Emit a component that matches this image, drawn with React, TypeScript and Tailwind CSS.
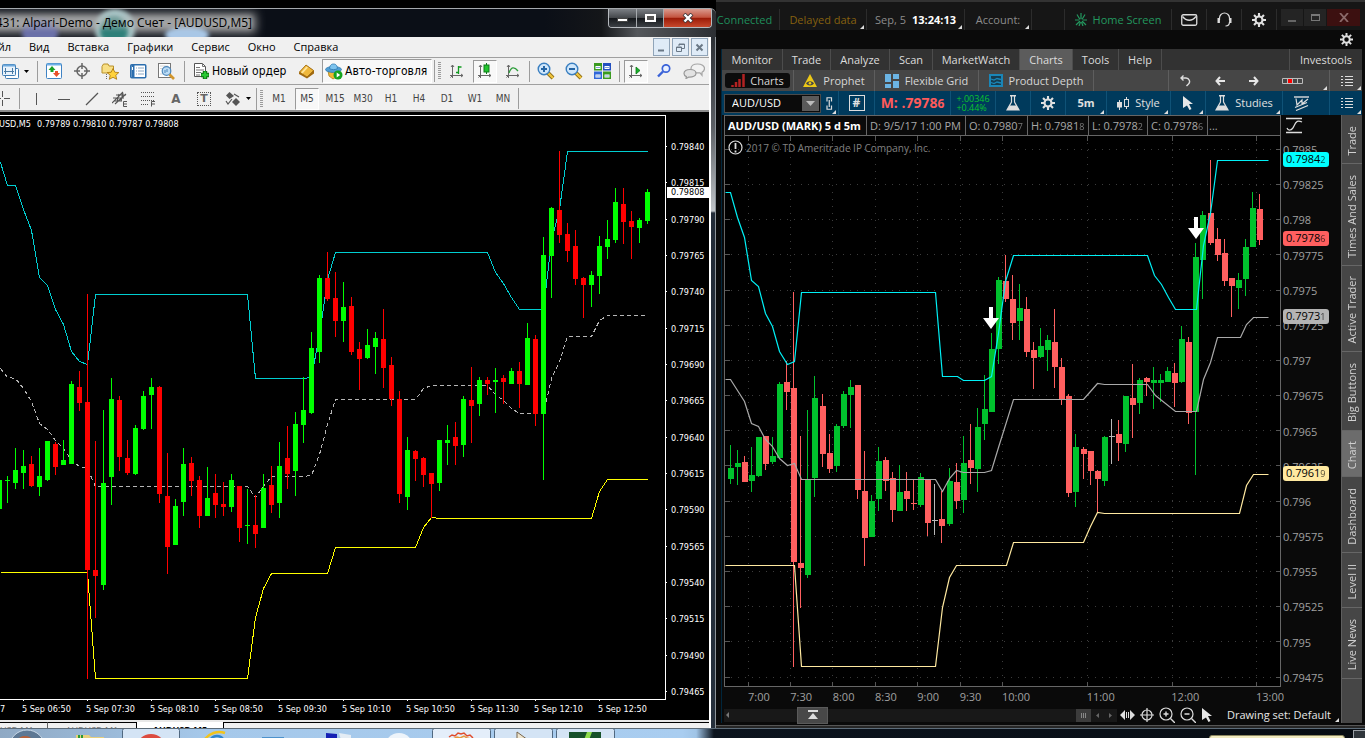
import React from "react";

type Candle = [string, number, number, number, number];

const leftCandles: Candle[] = [
  ["g", 480, 480, 509, 509], ["g", 476, 480, 481, 503], ["g", 448, 470, 483, 489], ["g", 450, 466, 473, 489],
  ["r", 456, 464, 486, 487], ["g", 448, 476, 487, 496], ["g", 441, 441, 480, 481], ["r", 442, 444, 467, 475],
  ["g", 440, 460, 465, 465], ["g", 381, 384, 464, 464], ["r", 371, 387, 403, 411], ["r", 294, 402, 570, 679],
  ["r", 441, 570, 576, 618], ["g", 410, 483, 585, 590], ["g", 378, 399, 477, 505], ["r", 396, 400, 457, 471],
  ["r", 440, 458, 473, 475], ["g", 425, 428, 474, 475], ["g", 391, 396, 429, 430], ["g", 378, 387, 395, 429],
  ["r", 386, 387, 494, 503], ["r", 453, 496, 547, 574], ["g", 499, 506, 545, 545], ["g", 448, 464, 502, 516],
  ["r", 457, 463, 481, 496], ["r", 476, 480, 516, 528], ["g", 467, 498, 516, 516], ["r", 474, 493, 505, 518],
  ["r", 482, 504, 507, 516], ["g", 474, 480, 507, 512], ["r", 486, 486, 528, 542], ["g", 489, 525, 526, 544],
  ["r", 495, 525, 534, 548], ["g", 474, 488, 528, 528], ["r", 466, 485, 505, 513], ["g", 442, 466, 503, 518],
  ["r", 426, 458, 474, 489], ["g", 412, 424, 471, 496], ["g", 377, 410, 425, 443], ["g", 332, 348, 413, 414],
  ["g", 275, 278, 352, 363], ["r", 252, 278, 299, 301], ["r", 272, 298, 321, 337], ["g", 282, 307, 321, 342],
  ["r", 297, 306, 352, 355], ["r", 342, 349, 359, 390], ["g", 329, 345, 358, 359], ["g", 332, 338, 347, 374],
  ["r", 309, 339, 368, 388], ["r", 357, 365, 399, 406], ["r", 391, 399, 494, 503], ["g", 437, 450, 497, 510],
  ["r", 450, 451, 459, 481], ["r", 457, 458, 475, 487], ["r", 473, 473, 484, 518], ["g", 440, 440, 483, 491],
  ["g", 425, 440, 443, 465], ["r", 422, 437, 446, 465], ["g", 396, 399, 445, 457], ["r", 367, 400, 406, 443],
  ["g", 377, 380, 404, 416], ["r", 377, 380, 384, 395], ["g", 368, 380, 382, 413], ["r", 375, 378, 382, 404],
  ["g", 368, 371, 384, 384], ["r", 362, 371, 384, 408], ["g", 323, 338, 385, 385], ["r", 335, 339, 414, 426],
  ["g", 237, 255, 414, 480], ["g", 207, 208, 256, 298], ["r", 151, 210, 235, 243], ["r", 223, 234, 251, 262],
  ["r", 230, 246, 279, 285], ["r", 277, 278, 285, 318], ["g", 271, 275, 285, 307], ["g", 236, 246, 276, 294],
  ["g", 220, 239, 247, 259], ["g", 188, 202, 240, 243], ["r", 188, 204, 222, 244], ["r", 211, 221, 227, 259],
  ["g", 218, 220, 228, 243], ["g", 189, 192, 221, 224],
];

const rightCandles: Candle[] = [
  ["g", 445, 468, 479, 484], ["g", 450, 463, 467, 485], ["r", 456, 462, 482, 482], ["g", 447, 475, 481, 492],
  ["g", 437, 437, 476, 477], ["r", 436, 436, 464, 470], ["g", 437, 456, 462, 464], ["g", 382, 384, 458, 458],
  ["r", 361, 382, 392, 410], ["r", 292, 388, 562, 667], ["r", 436, 563, 568, 608], ["g", 410, 480, 575, 578],
  ["g", 376, 398, 478, 497], ["r", 394, 406, 454, 467], ["r", 434, 453, 469, 473], ["g", 424, 426, 466, 472],
  ["g", 391, 394, 426, 428], ["g", 380, 387, 395, 428], ["r", 385, 385, 490, 499], ["r", 451, 491, 538, 566],
  ["g", 495, 501, 537, 537], ["g", 447, 461, 499, 511], ["r", 457, 460, 481, 491], ["r", 472, 478, 510, 522],
  ["g", 465, 492, 511, 511], ["r", 472, 491, 499, 511], ["r", 480, 503, 504, 510], ["g", 473, 477, 505, 507],
  ["r", 480, 480, 523, 536], ["n", 484, 520, 521, 535], ["r", 491, 519, 526, 543], ["g", 468, 481, 524, 526],
  ["r", 463, 482, 501, 509], ["g", 436, 463, 500, 513], ["r", 424, 460, 468, 484], ["g", 408, 427, 469, 492],
  ["g", 375, 409, 424, 440], ["g", 333, 349, 412, 412], ["g", 277, 280, 349, 364], ["r", 255, 281, 299, 302],
  ["r", 275, 299, 323, 340], ["g", 284, 308, 321, 340], ["r", 297, 309, 352, 357], ["r", 342, 350, 358, 389],
  ["g", 328, 346, 357, 358], ["g", 335, 340, 350, 371], ["r", 309, 342, 367, 388], ["r", 358, 367, 399, 405],
  ["r", 394, 396, 493, 497], ["g", 434, 447, 492, 507], ["r", 447, 449, 454, 479], ["r", 451, 451, 471, 485],
  ["r", 470, 471, 479, 512], ["g", 436, 437, 481, 486], ["n", 419, 436, 437, 464], ["r", 420, 434, 443, 461],
  ["g", 396, 396, 444, 452], ["r", 364, 398, 405, 438], ["g", 378, 380, 403, 414], ["r", 377, 378, 382, 396],
  ["g", 367, 380, 383, 409], ["g", 374, 380, 383, 402], ["g", 367, 371, 382, 382], ["r", 363, 373, 383, 407],
  ["g", 326, 339, 382, 383], ["r", 337, 342, 413, 424], ["g", 243, 257, 412, 475], ["g", 211, 215, 260, 299],
  ["r", 160, 213, 243, 245], ["r", 228, 239, 255, 261], ["r", 239, 253, 281, 286], ["r", 278, 278, 286, 317],
  ["g", 273, 280, 288, 309], ["g", 239, 247, 279, 296], ["g", 192, 208, 247, 247], ["r", 194, 209, 240, 245],
];

function Candles({ data, x0, step, body, colors }: { data: Candle[]; x0: number; step: number; body: number; colors: Record<string, string> }) {
  return (
    <g shapeRendering="crispEdges">
      {data.map(([c, hi, top, bot, lo], i) => {
        const x = Math.floor(x0 + step * i);
        return (
          <g key={i} fill={colors[c]}>
            <rect x={x} y={hi} width={1} height={Math.max(1, lo - hi)} />
            <rect x={x - 2} y={top} width={body} height={Math.max(1, bot - top)} />
          </g>
        );
      })}
    </g>
  );
}

function Icon({ w = 16, h = 16, children }: { w?: number; h?: number; children: React.ReactNode }) {
  return (
    <svg width={w} height={h} viewBox={`0 0 ${w} ${h}`} fill="none" className="block shrink-0" aria-hidden="true">
      {children}
    </svg>
  );
}

/* ---------- MetaTrader window ---------- */

const leftPrices = ["0.79840", "0.79815", "0.79790", "0.79765", "0.79740", "0.79715", "0.79690", "0.79665", "0.79640", "0.79615", "0.79590", "0.79565", "0.79540", "0.79515", "0.79490", "0.79465"];
const leftTimes = ["5 Sep 06:50", "5 Sep 07:30", "5 Sep 08:10", "5 Sep 08:50", "5 Sep 09:30", "5 Sep 10:10", "5 Sep 10:50", "5 Sep 11:30", "5 Sep 12:10", "5 Sep 12:50"];

function Tool({ label, pressed, children }: { label: string; pressed?: boolean; children: React.ReactNode }) {
  return (
    <button
      aria-label={label}
      title={label}
      className={
        pressed
          ? "flex h-[23px] w-[24px] mx-[2px] shrink-0 items-center justify-center border border-b-white border-r-white border-l-[#9a9a9a] border-t-[#9a9a9a] bg-[#f8f8f8]"
          : "flex h-[23px] w-[28px] shrink-0 items-center justify-center"
      }
    >
      {children}
    </button>
  );
}

function Sep({ box }: { box: string }) {
  return (
    <span className={`flex h-[21px] shrink-0 justify-center ${box}`}>
      <span className="h-full w-px bg-[#9c9c9c]" />
    </span>
  );
}

function Grip() {
  return (
    <span className="flex h-[22px] w-[9px] shrink-0 items-center gap-[2px] border-l border-[#9c9c9c]">
      <span className="ml-[3px] h-[18px] w-[3px] bg-[repeating-linear-gradient(#9c9c9c_0_1px,#f0f0f0_1px_2px)]" />
    </span>
  );
}

function Caret() {
  return (
    <Icon w={5} h={3}>
      <path d="M0 0h5L2.500 3z" fill="#000" />
    </Icon>
  );
}

function AxisIcon({ children }: { children: React.ReactNode }) {
  return (
    <Icon w={16} h={16}>
      <path d="M3.500 2v13M1 12.500h13M2 4l1.500-2L5 4M12 11l2 1.500-2 1.500M1.500 14.500l2-2" stroke="#666" />
      {children}
    </Icon>
  );
}

function Lens({ plus }: { plus: boolean }) {
  return (
    <Icon w={18} h={18}>
      <path d="M10.500 10.500l5.500 5.500" stroke="#8a6a14" strokeWidth="4" />
      <path d="M11 11l5 5" stroke="#f0c53c" strokeWidth="2.400" />
      <circle cx="7" cy="7" r="5.800" fill="#cfe6fa" stroke="#3a7fc0" strokeWidth="1.400" />
      <path d={plus ? "M4 7h6M7 4v6" : "M4 7h6"} stroke="#2565a5" strokeWidth="2" />
    </Icon>
  );
}

function TitleBar() {
  return (
    <div className="relative flex h-[29px] shrink-0 items-center justify-between overflow-hidden rounded-tr-md border-t border-[#a5a9ad] bg-[linear-gradient(90deg,#0b0f17_0%,#0b0f17_76%,#141619_84%,#54575b_89%,#2c2f33_100%)] pr-[4px]">
      <svg className="absolute left-0 top-0 h-full w-[280px]" viewBox="0 0 280 28" aria-hidden="true">
        <defs>
          <filter id="soft" x="-20%" y="-60%" width="140%" height="220%"><feGaussianBlur stdDeviation="5" /></filter>
          <filter id="soft2" x="-30%" y="-30%" width="160%" height="160%"><feGaussianBlur stdDeviation="2" /></filter>
        </defs>
        <rect x="-20" y="4" width="276" height="20" fill="#8f9092" filter="url(#soft)" />
        <ellipse cx="40" cy="24" rx="18" ry="13" fill="#6a6fa8" filter="url(#soft2)" />
        <circle cx="115" cy="20" r="20" fill="#a9c4c6" filter="url(#soft2)" />
        <circle cx="114" cy="22" r="14" fill="#2f8079" filter="url(#soft2)" />
        <ellipse cx="187" cy="26" rx="22" ry="9" fill="#a9c7e6" filter="url(#soft2)" />
        <rect x="-10" y="7" width="262" height="13" fill="#bbb" opacity=".45" filter="url(#soft2)" />
      </svg>
      <div className="relative flex w-[252px] justify-end overflow-hidden whitespace-nowrap text-[12px] leading-4 text-black">
        1431: Alpari-Demo - Демо Счет - [AUDUSD,M5]
      </div>
      <div className="relative flex h-[19px] self-start overflow-hidden rounded-b-[4px] border border-t-0 border-[#b6babf]">
        <button aria-label="Minimize" className="flex w-[28px] items-center justify-center border-r border-[#a5a9ad] bg-[linear-gradient(#7b7f84,#45484c_48%,#15181c_52%,#3c4045)]">
          <span className="mt-1 h-[4px] w-[11px] border border-[#444] bg-white" />
        </button>
        <button aria-label="Maximize" className="flex w-[27px] items-center justify-center border-r border-[#a5a9ad] bg-[linear-gradient(#7b7f84,#45484c_48%,#15181c_52%,#3c4045)]">
          <span className="h-[8px] w-[11px] border-2 border-white bg-[#555]" />
        </button>
        <button aria-label="Close" className="flex w-[47px] items-center justify-center bg-[linear-gradient(#d99a8e,#c4543f_46%,#9c1c08_52%,#c6482c)]">
          <Icon w={12} h={10}>
            <path d="M2 1l8 8M10 1L2 9" stroke="#43383a" strokeWidth="4" />
            <path d="M2.500 1.500l7 7M9.500 1.500l-7 7" stroke="#fff" strokeWidth="2.400" />
          </Icon>
        </button>
      </div>
    </div>
  );
}

function MenuBar() {
  return (
    <div className="flex h-[21px] shrink-0 items-center justify-between border-b border-[#a0a0a0] bg-[#f0f0f0] pr-px">
      <nav className="flex items-center gap-[18px] text-[11px] leading-4 text-black">
        <button className="flex w-[11px] justify-end overflow-hidden">Файл</button>
        {["Вид", "Вставка", "Графики", "Сервис", "Окно", "Справка"].map((m) => (
          <button key={m}>{m}</button>
        ))}
      </nav>
      <div className="flex gap-[2px]">
        {["Minimize chart", "Restore chart", "Close chart"].map((n, i) => (
          <button key={n} aria-label={n} className="flex h-[18px] w-[17px] items-center justify-center border border-[#90a4b8] bg-[#dfebf7]">
            <Icon w={9} h={9}>
              {i === 0 && <path d="M1 7.500h6" stroke="#6a7886" strokeWidth="2" />}
              {i === 1 && <path d="M3 3V1h5.500v4.500H6M.5 4h5v4.500h-5zM.5 4.500h5M3 1.500h5" stroke="#6a7886" />}
              {i === 2 && <path d="M1.500 1.500l6 6M7.500 1.500l-6 6" stroke="#6a7886" strokeWidth="2" />}
            </Icon>
          </button>
        ))}
      </div>
    </div>
  );
}

function MainToolbar() {
  return (
    <div className="flex h-[27px] shrink-0 items-center overflow-hidden border-b border-[#a0a0a0] bg-[#f0f0f0]">
      <button aria-label="Profiles" className="flex w-[34px] shrink-0 items-center gap-[4px] pl-px">
        <Icon w={19} h={17}>
          <rect x="4.500" y="5.500" width="13" height="10" rx="1" fill="#fff" stroke="#3f7cb3" />
          <rect x="1.500" y="1.500" width="13" height="11" rx="1" fill="#e8f2fb" stroke="#3f7cb3" />
          <path d="M2 2.500h12" stroke="#6da9dc" strokeWidth="2" />
          <path d="M4.500 5v6M11.500 5v6M3 8.500h10" stroke="#4a7ba4" />
        </Icon>
        <Caret />
      </button>
      <Sep box="w-[6px]" />
      <Tool label="Market Watch">
        <Icon>
          <rect x=".5" y=".5" width="15" height="15" rx="1" fill="#fff" stroke="#3f83c4" />
          <path d="M1 1.500h14" stroke="#6fb0e6" strokeWidth="2" />
          <path d="M6 3l3.500 4h-2v2h-3V7h-2z" fill="#18a028" />
          <path d="M10.500 14L7 10h2V8h3v2h2z" fill="#e8502a" />
        </Icon>
      </Tool>
      <Tool label="Data Window">
        <Icon>
          <circle cx="8" cy="8" r="5" stroke="#666" strokeWidth="1.500" />
          <path d="M8 0v6M8 10v6M0 8h6M10 8h6" stroke="#666" strokeWidth="1.500" />
        </Icon>
      </Tool>
      <Tool label="Navigator">
        <Icon w={18} h={17}>
          <path d="M1 3.500L2.500 1H7l1 2h4.500v7H1z" fill="#f8df85" stroke="#b8902a" />
          <path d="M5.500 11v5" stroke="#666" strokeDasharray="1 1" />
          <path d="M12 5.500l1.800 3.700 4 .4-3 2.700.9 4-3.700-2-3.700 2 .9-4-3-2.700 4-.4z" fill="#ffd23c" stroke="#a87408" strokeWidth=".8" />
        </Icon>
      </Tool>
      <Tool label="Terminal">
        <Icon w={17} h={15}>
          <rect x=".75" y=".75" width="15" height="13" rx="1" fill="#fff" stroke="#2c6eae" strokeWidth="1.500" />
          <path d="M3 1v12" stroke="#2c6eae" strokeWidth="3" />
          <path d="M6 4h1M8 4h6M6 7h1M8 7h6M6 10h1M8 10h6" stroke="#8aa6c2" />
          <path d="M2.500 3v3" stroke="#fff" />
        </Icon>
      </Tool>
      <Tool label="Strategy Tester">
        <Icon w={17} h={17}>
          <rect x=".5" y=".5" width="12" height="14" fill="#fff" stroke="#777" />
          <path d="M2.500 3h8M2.500 5.500h3M2.500 11h3" stroke="#aaa" strokeDasharray="1 1" />
          <circle cx="8.500" cy="8" r="4.300" fill="#bcdcf5" stroke="#4b86bb" strokeWidth="1.200" />
          <path d="M7 10V7M9 9V6" stroke="#4b86bb" />
          <path d="M11.500 11.500l4.500 4.500" stroke="#d2962c" strokeWidth="2.600" />
        </Icon>
      </Tool>
      <Sep box="w-[8px]" />
      <button className="flex h-[23px] w-[102px] shrink-0 items-center gap-[1px] pl-[5px] font-['DejaVu_Sans_Condensed','DejaVu_Sans',sans-serif] text-[12px] text-black">
        <Icon w={18} h={17}>
          <path d="M1.500.5h8l3 3v10h-11z" fill="#fff" stroke="#555" />
          <path d="M9.500.5v3h3M3 4.500h4M3 7h8M3 9.500h5M3 12h4" stroke="#777" />
          <path d="M8 12h8M12 8v8" stroke="#0b6d12" strokeWidth="4.400" />
          <path d="M8.500 12h7M12 8.500v7" stroke="#28c832" strokeWidth="2.400" />
        </Icon>
        <span className="whitespace-nowrap">Новый ордер</span>
      </button>
      <button aria-label="MetaEditor" className="flex h-[23px] w-[32px] shrink-0 items-center justify-center">
        <Icon w={17} h={15}>
          <path d="M1 8.500L8 1l8 5.500v3L9 14.500 1 10z" fill="#a06a10" />
          <path d="M1.500 8L8 1l7.500 5.500L9 13z" fill="#efb83c" stroke="#a06a10" strokeWidth=".8" />
          <path d="M3 8.500l5.500-6 1.500 1-5.500 6z" fill="#ffe49a" />
        </Icon>
      </button>
      <button className="flex h-[24px] w-[110px] shrink-0 items-center gap-[2px] border border-b-white border-r-white border-l-[#9a9a9a] border-t-[#9a9a9a] bg-[#f8f8f8] pl-[2px] font-['DejaVu_Sans_Condensed','DejaVu_Sans',sans-serif] text-[12px] text-black">
        <Icon w={18} h={17}>
          <path d="M3 8h11l-1 5-5 3-4-3z" fill="#f0b834" stroke="#b08018" strokeWidth=".8" />
          <ellipse cx="8.500" cy="6.500" rx="8" ry="3" fill="#4f9ed4" stroke="#2d78b0" strokeWidth=".8" />
          <path d="M4.500 5.500C5 1.500 7 1 8.500 1s3.500.5 4 4.500c-2 1.500-6 1.500-8 0z" fill="#7cc3ee" stroke="#2d78b0" strokeWidth=".8" />
          <circle cx="13" cy="12" r="4.500" fill="#14a41e" />
          <path d="M11.700 9.500v5l3.500-2.500z" fill="#fff" />
        </Icon>
        <span className="whitespace-nowrap">Авто-торговля</span>
      </button>
      <span className="w-[2px] shrink-0" />
      <Grip />
      <Tool label="Bar chart"><AxisIcon><path d="M9.500 3v8M9.500 4h3M7 9.500h2.500" stroke="#129a20" strokeWidth="1.300" /></AxisIcon></Tool>
      <Tool label="Candlesticks" pressed>
        <AxisIcon>
          <path d="M9.500 0v11" stroke="#0d7a18" />
          <rect x="7" y="2" width="5" height="7" fill="#22c52e" stroke="#0d7a18" />
        </AxisIcon>
      </Tool>
      <Tool label="Line chart"><AxisIcon><path d="M4 10c2-6 5-7 9-2" stroke="#2f9e3c" strokeWidth="1.300" /></AxisIcon></Tool>
      <Sep box="w-[5px]" />
      <Tool label="Zoom in"><Lens plus /></Tool>
      <Tool label="Zoom out"><Lens plus={false} /></Tool>
      <Tool label="Tile windows">
        <Icon w={17} h={16}>
          <rect x="0" y="0" width="8" height="7.500" fill="#3a9a20" />
          <rect x="9" y="0" width="8" height="7.500" fill="#2350c0" />
          <rect x="0" y="8.500" width="8" height="7.500" fill="#2f66d8" />
          <rect x="9" y="8.500" width="8" height="7.500" fill="#3a9a20" />
          <path d="M1.500 4.500h5M10.500 4.500h5M1.500 13h5M10.500 13h5" stroke="#fff" strokeWidth="3" />
          <path d="M2 4.500h4M11 4.500h4M2 13h4M11 13h4" stroke="#7fa4d8" />
        </Icon>
      </Tool>
      <Sep box="w-[6px]" />
      <Tool label="Chart shift" pressed><AxisIcon><path d="M8 4v7l4-3.500z" fill="#18b028" stroke="#0d7a18" strokeWidth=".8" /></AxisIcon></Tool>
      <Tool label="Search">
        <Icon w={14} h={14}>
          <circle cx="9" cy="4.500" r="3.700" fill="#e8f0ff" stroke="#3a62d8" strokeWidth="1.700" />
          <path d="M6 7.500l-5 5" stroke="#3a62d8" strokeWidth="2.400" />
        </Icon>
      </Tool>
      <button aria-label="Chat" className="flex h-[23px] w-[31px] shrink-0 items-center justify-center">
        <Icon w={22} h={16}>
          <path d="M14.500 1C10.500 1 8 3 8 5.500s2.500 4 5 4.300l4 0 2 2.500V9.300C20.500 8.500 21.500 7 21.500 5.500 21.500 3 18.500 1 14.500 1z" fill="#f2f2f2" stroke="#a5a5a5" strokeWidth="1.200" />
          <path d="M7 6.500c-3.500 0-6 1.600-6 3.900 0 1.500 1 2.600 2.400 3.200L3 15.500l2.600-1.400c4 .3 7.400-1.200 7.400-3.700 0-2.300-2.500-3.900-6-3.900z" fill="#e2e2e2" stroke="#999" strokeWidth="1.200" />
        </Icon>
      </button>
    </div>
  );
}

function LineToolbar() {
  const k = "#555";
  return (
    <div className="flex h-[27px] shrink-0 items-center overflow-hidden border-b-2 border-[#8c8c8c] bg-[#f0f0f0] pt-[2px] text-[#444]">
      <button aria-label="Crosshair" className="flex w-[17px] shrink-0">
        <Icon w={10} h={15}><path d="M2.500 0v6M2.500 9v6M0 7.500h1M4 7.500h6" stroke={k} /></Icon>
      </button>
      <Sep box="w-[5px]" />
      <Tool label="Vertical line"><Icon><path d="M8.500 2v12" stroke={k} /></Icon></Tool>
      <Tool label="Horizontal line"><Icon><path d="M2 8.500h12" stroke={k} /></Icon></Tool>
      <Tool label="Trend line"><Icon><path d="M2 14L14 2" stroke={k} strokeWidth="1.200" /></Icon></Tool>
      <Tool label="Channel">
        <Icon>
          <path d="M0 12L11 1M3 13L14 3M1 7h11M4 4h10M2 10h8M5 11l2-8M9 10l2-8" stroke={k} strokeWidth="1.100" />
          <path d="M15 10.500h-3.500v5H15M11.500 13H15" stroke={k} />
        </Icon>
      </Tool>
      <Tool label="Fibonacci">
        <Icon>
          <path d="M1 1.500h14M1 5.500h14M1 9.500h14M1 13.500h8" stroke={k} strokeDasharray="1 1" />
          <path d="M15 10.500h-3.500v5M11.500 13H15" stroke={k} />
        </Icon>
      </Tool>
      <Tool label="Text"><span className="font-['DejaVu_Sans',sans-serif] text-[12px] font-bold leading-4 text-[#666]">A</span></Tool>
      <Tool label="Text label">
        <span className="flex h-[14px] w-[14px] items-center justify-center border border-dotted border-[#555] font-['DejaVu_Sans',sans-serif] text-[11px] font-bold leading-3 text-[#666]">T</span>
      </Tool>
      <Tool label="Arrows">
        <Icon w={15} h={14}>
          <path d="M4.500 0L9 4 4.500 7 1 3.500z" fill={k} />
          <path d="M11 6l4 4-4 4-4-4z" fill={k} />
          <path d="M1 9l2 3 4-5M9 2l5 3" stroke={k} strokeWidth="1.200" />
        </Icon>
      </Tool>
      <span className="flex w-[10px] shrink-0"><Caret /></span>
      <Grip />
      {["M1", "M5", "M15", "M30", "H1", "H4", "D1", "W1", "MN"].map((t) => (
        <button
          key={t}
          className={
            t === "M5"
              ? "mx-[2px] flex h-[22px] w-[24px] shrink-0 items-center justify-center border border-b-white border-r-white border-l-[#9a9a9a] border-t-[#9a9a9a] bg-[#f8f8f8] font-['DejaVu_Sans_Condensed','DejaVu_Sans',sans-serif] text-[10px]"
              : "flex h-[22px] w-[28px] shrink-0 items-center justify-center font-['DejaVu_Sans_Condensed','DejaVu_Sans',sans-serif] text-[10px]"
          }
        >
          {t}
        </button>
      ))}
      <Sep box="w-[3px]" />
    </div>
  );
}

function LeftChart() {
  return (
    <div className="flex min-h-0 flex-1 flex-col bg-black font-['DejaVu_Sans_Condensed','DejaVu_Sans',sans-serif] text-[9px] leading-[10px] text-white">
      <div className="flex min-h-0 flex-1">
        <div className="relative min-w-0 flex-1">
          <svg viewBox="0 112 667 589" preserveAspectRatio="none" className="absolute inset-0 h-full w-full" fill="none" role="img" aria-label="AUDUSD M5 candlestick chart">
            <g stroke="#fff" shapeRendering="crispEdges">
              <path d="M0 115.500H665.500V699.500H0" />
              {leftPrices.map((p, i) => <path key={p} d={`M665 ${Math.round(146 + 36.33 * i)}.500h3`} />)}
              {leftTimes.map((t, i) => <path key={t} d={`M${23.5 + 64 * i} 700v3`} />)}
            </g>
            <g transform="translate(.5 .5)" shapeRendering="crispEdges">
              <path stroke="#00ced1" d="M0 162L7 185H15L23 209L31 230L39 277L47 285L55 309L63 324L71 351L79 361L87 364L95 294H247L255 378H305L311 376L319 335L327 279L335 252H487L495 272L503 283L511 297L519 309H543L551 240L559 209L567 151H647" />
              <path stroke="#b5b5b5" strokeDasharray="4 3" d="M0 368L7 377L15 378L23 388L31 401L39 423L47 429L55 440L63 448L71 460L79 466L87 468L95 486H247L255 497L263 486L271 476H303L311 475L319 454L327 424L335 399H415L423 388L431 385H487L495 394L503 400L511 408L519 413H543L551 378L559 361L567 336H591L599 320L607 315H647" />
              <path stroke="#ff0" d="M0 572H87L95 678H247L255 617L263 588L271 573H327L335 547H415L423 527L431 517L439 518H591L599 491L607 479H647" />
            </g>
            <Candles data={leftCandles} x0={-1} step={8} body={5} colors={{ g: "#00ff00", r: "#ff0000", n: "#bbb" }} />
          </svg>
          <div className="relative flex gap-[6px] whitespace-pre pt-[7px]">
            <span className="flex w-[31px] justify-end overflow-hidden">AUDUSD,M5</span>
            <span>0.79789 0.79810 0.79787 0.79808</span>
          </div>
        </div>
        <div className="relative flex w-[42px] shrink-0 flex-col justify-between pb-[4px] pl-[4px] pt-[30px]">
          {leftPrices.map((p) => <span key={p}>{p}</span>)}
          <span className="absolute left-0 top-[75px] w-full bg-white pl-[4px] leading-[11px] text-black">0.79808</span>
        </div>
      </div>
      <div className="flex h-[19px] shrink-0 items-start pt-[3px]">
        <span className="w-[22px] shrink-0">7</span>
        <div className="grid min-w-0 flex-1 grid-cols-10 pr-[47px]">
          {leftTimes.map((t) => <span key={t} className="whitespace-nowrap">{t}</span>)}
        </div>
      </div>
    </div>
  );
}

function LeftWindow() {
  return (
    <section className="flex min-w-0 flex-col bg-black pt-2">
      <TitleBar />
      <div className="flex min-h-0 flex-1">
        <div className="flex min-w-0 flex-1 flex-col">
          <MenuBar />
          <MainToolbar />
          <LineToolbar />
          <LeftChart />
          <div className="flex h-[8px] shrink-0 overflow-hidden border-t-2 border-[#e8e8e8] bg-[#f0f0f0] text-[9px] leading-[15px] text-[#777]">
            <button className="w-[48px] border-r border-t border-black border-r-[#666] text-left">USD,M1</button>
            <button className="w-[89px] border-r border-t border-black text-center">AUDUSD,M1</button>
            <button className="w-[86px] bg-white text-center font-bold text-black">AUDUSD,M5</button>
            <span className="flex-1 border-l border-t border-black" />
          </div>
        </div>
        <div className="w-[7px] shrink-0 border-l-2 border-r border-white border-r-[#8d9499] bg-[linear-gradient(#2c3035_0px,#5c6065_90px,#c0c4c8_174px,#232c38_176px,#26303c_100%)]" />
      </div>
    </section>
  );
}

/* ---------- thinkorswim window ---------- */

const rightPrices = ["0.7985", "0.79825", "0.798", "0.79775", "0.7975", "0.79725", "0.797", "0.79675", "0.7965", "0.79625", "0.796", "0.79575", "0.7955", "0.79525", "0.795", "0.79475"];
const gridX = [748, 790, 832, 875, 917, 960, 1002, 1087, 1172, 1256];
const gridY = [149, 184, 219, 254, 290, 325, 360, 395, 430, 465, 501, 536, 571, 606, 641, 677];

function Gear({ size = 14 }: { size?: number }) {
  return (
    <svg width={size} height={size} viewBox="0 0 16 16" fill="none" stroke="#e0e0e0" className="block shrink-0" aria-hidden="true">
      <circle cx="8" cy="8" r="4" strokeWidth="2.400" />
      <path strokeWidth="2.400" d="M8 0v3.500M8 12.500V16M0 8h3.500M12.500 8H16M2.300 2.300l2.500 2.500M11.200 11.200l2.500 2.500M13.700 2.300l-2.500 2.500M4.800 11.200l-2.500 2.500" />
    </svg>
  );
}

function Flask() {
  return (
    <Icon w={14} h={16}>
      <path d="M4 .75h6" stroke="#ddd" strokeWidth="1.500" />
      <path d="M5.500 1v6L1 15h12L8.500 7V1" stroke="#ddd" strokeWidth="1.200" />
      <path d="M3.500 10.500h7L13 15H1z" fill="#ddd" />
    </Icon>
  );
}

function ListIcon() {
  return (
    <Icon w={12} h={12}>
      <path d="M0 1.500h2M4 1.500h8M0 4.500h2M4 4.500h8M0 7.500h2M4 7.500h8M0 10.500h2M4 10.500h8" stroke="#ddd" />
    </Icon>
  );
}

function Pointer() {
  return <Icon w={12} h={14}><path d="M1 0l10 8H7l2.500 5-2 1L5 9.500 1 12z" fill="#e6e6e6" /></Icon>;
}

function Corner() {
  return (
    <svg width="4" height="4" viewBox="0 0 4 4" className="absolute bottom-px right-[2px]" aria-hidden="true">
      <path d="M4 0v4H0z" fill="#ddd" />
    </svg>
  );
}

function Cell({ w, label, corner, line = "border-[#2c2c2c]", children }: { w: string; label?: string; corner?: boolean; line?: string; children?: React.ReactNode }) {
  return (
    <button aria-label={label} className={`relative flex h-full shrink-0 items-center justify-center gap-[6px] whitespace-nowrap border-r ${w} ${line}`}>
      {children}
      {corner && <Corner />}
    </button>
  );
}

function AppHeader() {
  return (
    <header className="flex h-[49px] shrink-0 flex-col border-t-2 border-[#333] bg-[#0a0a0a] text-[11px] text-[#8c8c8c]">
      <div className="flex h-[28px] shrink-0 items-end justify-between bg-[#161616]">
        <div className="flex h-[21px]">
          <Cell w="w-[64px] pr-[6px]"><span className="text-[#1f8f5c]">Connected</span></Cell>
          <Cell w="w-[87px]" corner><span className="text-[#85600f]">Delayed data</span></Cell>
          <Cell w="w-[98px]" corner>Sep, 5 <b className="text-white">13:24:13</b></Cell>
          <Cell w="w-[67px]" corner>Account:</Cell>
        </div>
        <div className="flex h-[21px]">
          <span className="border-l border-[#2c2c2c]" />
          <Cell w="w-[107px]">
            <Icon w={12} h={13}>
              <path d="M6 0v6M2 1.500l3 5M10 1.500l-3 5M0 7h4M12 7H8M1 12l4-4M11 12L7 8M4 13l1.500-4M8 13L6.500 9" stroke="#23985f" strokeWidth="1.200" />
            </Icon>
            <span className="text-[#23985f]">Home Screen</span>
          </Cell>
          <Cell w="w-[35px]" label="Messages">
            <Icon w={17} h={12}>
              <rect x=".75" y=".75" width="15" height="10.500" rx="1.500" stroke="#ddd" strokeWidth="1.300" />
              <path d="M1.500 2.500c4 5 9.500 5 13.500 0" stroke="#ddd" strokeWidth="1.300" />
            </Icon>
          </Cell>
          <Cell w="w-[35px]" label="Support">
            <Icon w={15} h={15}>
              <path d="M2.500 8V6a5 5 0 0 1 10 0v2M12.500 10c0 2.500-1.500 4-4 4" stroke="#ddd" strokeWidth="1.200" />
              <path d="M1.700 6v5M13.300 6v5" stroke="#ddd" strokeWidth="2.400" />
            </Icon>
          </Cell>
          <Cell w="w-[35px]" label="Settings"><Gear /></Cell>
          <div className="ml-[4px] mr-[5px] flex h-[17px] gap-px">
            <button aria-label="Minimize window" className="flex w-[22px] items-end justify-center bg-[#242424] pb-[4px]"><span className="h-[2px] w-[8px] bg-[#666]" /></button>
            <button aria-label="Maximize window" className="flex w-[22px] items-center justify-center bg-[#242424]"><span className="h-[7px] w-[9px] border border-t-2 border-[#777]" /></button>
            <button aria-label="Close window" className="flex w-[33px] items-center justify-center bg-[#3c1010]">
              <Icon w={10} h={9}><path d="M1 0l8 9M9 0L1 9" stroke="#8b6a6a" strokeWidth="1.800" /></Icon>
            </button>
          </div>
        </div>
      </div>
      <div className="flex flex-1 items-center justify-end pr-[12px]">
        <button aria-label="Layout settings"><Gear size={13} /></button>
      </div>
    </header>
  );
}

function MainTabs() {
  const tabs: [string, string][] = [["Monitor", "w-[61px]"], ["Trade", "w-[48px]"], ["Analyze", "w-[59px]"], ["Scan", "w-[43px]"], ["MarketWatch", "w-[87px]"], ["Charts", "w-[53px] bg-[#5c5c5c]"], ["Tools", "w-[46px]"], ["Help", "w-[43px]"]];
  return (
    <nav className="flex h-[21px] shrink-0 justify-between bg-[#323232] text-[11px] text-[#dcdcdc]">
      <div className="flex">
        {tabs.map(([t, w]) => <Cell key={t} w={w} line="border-[#4c4c4c]">{t}</Cell>)}
      </div>
      <button className="w-[73px] border-l border-[#4c4c4c] text-center">Investools</button>
    </nav>
  );
}

function SubTabs() {
  const line = "border-[#5e5e5e]";
  return (
    <div className="flex h-[21px] shrink-0 justify-between bg-[#464646] text-[11px] text-[#d6d6d6]">
      <div className="flex">
        <div className={`flex items-center border-r px-[3px] ${line}`}>
          <button className="flex h-[15px] w-[65px] items-center justify-center gap-[5px] rounded-[3px] bg-[#0c0c0c]">
            <Icon w={14} h={13}>
              <path d="M1.500 11v2M5 8v5M8.500 5v8M12.500 0v13" stroke="#b22222" strokeWidth="2.500" />
            </Icon>
            Charts
          </button>
        </div>
        <Cell w="w-[81px]" line={line}>
          <Icon w={14} h={13}>
            <path d="M7 0l7 13H0z" fill="#ecc817" />
            <path d="M3 9.500c2-3 6-3 8 0-2 2.500-6 2.500-8 0z" fill="#464646" />
            <circle cx="7" cy="9.300" r="1.300" fill="#ecc817" />
          </Icon>
          Prophet
        </Cell>
        <Cell w="w-[104px]" line={line}>
          <Icon w={14} h={14}>
            <path d="M0 0h6v8H0zM8 0h6v5H8zM0 10h6v4H0zM8 7h6v7H8z" fill="#6bb4e4" />
          </Icon>
          Flexible Grid
        </Cell>
        <Cell w="w-[115px]" line={line}>
          <Icon w={14} h={13}>
            <rect x="1" y="1" width="12" height="11" stroke="#1a86b8" strokeWidth="2" fill="#163c50" />
            <path d="M2 5l3 1 3-1.500 4 1M2 8.500l3 1 3-1.500 4 1" stroke="#1a86b8" strokeWidth="1.300" />
          </Icon>
          Product Depth
        </Cell>
        <span className={`w-[75px] border-r ${line}`} />
      </div>
      <div className="flex">
        <Cell w="w-[34px]" label="Undo" line="border-transparent">
          <Icon w={11} h={12}><path d="M1 3h5a3.500 3.500 0 0 1 2.500 6L6.500 11M3.500.5L1 3l2.500 2.500" stroke="#ddd" strokeWidth="1.400" /></Icon>
        </Cell>
        <Cell w="w-[34px]" label="Back" line="border-transparent">
          <Icon w={10} h={10}><path d="M1 5h9M5 1L1.500 5 5 9" stroke="#e6e6e6" strokeWidth="2" /></Icon>
        </Cell>
        <Cell w="w-[34px]" label="Forward" line="border-transparent">
          <Icon w={10} h={10}><path d="M0 5h9M5 1l3.500 4L5 9" stroke="#e6e6e6" strokeWidth="2" /></Icon>
        </Cell>
        <Cell w="w-[59px] pr-[15px]" label="Layout slots" corner line={line}>
          <Icon w={21} h={6}>
            <path d="M.5.5h20v5H.5zM5.500.5v5M10.500.5v5M15.500.5v5" stroke="#bbb" />
            <rect x="6" y="1" width="4" height="4" fill="#f00" />
          </Icon>
        </Cell>
        <Cell w="w-[34px]" label="Menu" corner line="border-transparent"><ListIcon /></Cell>
      </div>
    </div>
  );
}

function SymbolBar() {
  const line = "border-[#0f5277]";
  return (
    <div className="flex h-[24px] shrink-0 justify-between bg-[#003a5c] text-[11px] text-[#e0e0e0]">
      <div className="flex items-center">
        <div className="relative ml-[2px] h-[19px] w-[97px] border border-[#4a4a4a] bg-[#0b0b0b]">
          <select aria-label="Symbol" defaultValue="AUD/USD" className="h-full w-full appearance-none bg-transparent pl-[7px] text-[11px] leading-4 text-white outline-none">
            <option>AUD/USD</option>
          </select>
          <span className="pointer-events-none absolute right-px top-px flex h-[15px] w-[17px] items-center justify-center bg-[#5a5a5a]">
            <Icon w={9} h={5}><path d="M0 0h9L4.500 5z" fill="#bbb" /></Icon>
          </span>
        </div>
        <Cell w="w-[18px]" label="Link" corner line={line}>
          <Icon w={7} h={13}>
            <path d="M1 4.500V.75h4.500V4.500M1 8.500v3.750h4.500V8.500M3.250 3v7" stroke="#ddd" strokeWidth="1.200" />
          </Icon>
        </Cell>
        <Cell w="w-[36px]" line={line}>
          <span className="flex h-[16px] w-[16px] items-center justify-center border border-[#ddd] text-[12px] font-bold leading-3">#</span>
        </Cell>
        <Cell w="w-[76px]" line={line}>
          <span className="text-[14px] font-bold text-[#ff5a5a]">M: .7978<span className="text-[12px]">6</span></span>
        </Cell>
        <Cell w="w-[45px]" line={line}>
          <span className="text-left text-[9px] leading-[9px] text-[#0cc42e]">+.00346<br />+0.44%</span>
        </Cell>
        <Cell w="w-[35px]" label="Studies list" line={line}><Flask /></Cell>
        <Cell w="w-[35px]" label="Chart settings" line={line}><Gear /></Cell>
      </div>
      <div className="flex items-center">
        <Cell w="w-[41px]" corner line={line}><b>5m</b></Cell>
        <Cell w="w-[64px]" corner line={line}>
          <Icon w={12} h={13}>
            <path d="M2.500 3v10M9.500 0v2M9.500 10v2" stroke="#ddd" />
            <rect x="0" y="5" width="5" height="5.500" fill="#ddd" />
            <rect x="7.500" y="2.500" width="4" height="7" stroke="#ddd" />
          </Icon>
          Style
        </Cell>
        <Cell w="w-[35px]" label="Pointer" corner line={line}><Pointer /></Cell>
        <Cell w="w-[77px]" corner line={line}><Flask />Studies</Cell>
        <Cell w="w-[47px] pr-[10px]" label="Drawings" line={line}>
          <Icon w={15} h={15}>
            <path d="M0 1h15" stroke="#ddd" strokeWidth="1.400" />
            <path d="M2 2.500l1 6.500 5-5 0 4 6-5M1 11.500L13 6.500M2 14.500L14 9.500" stroke="#ddd" strokeWidth="1.200" />
          </Icon>
        </Cell>
        <Cell w="w-[34px]" label="Chart menu" corner line="border-transparent"><ListIcon /></Cell>
      </div>
    </div>
  );
}

function Quote({ main, last }: { main: string; last: string }) {
  return <>{main}<span className="text-[9px] opacity-70">{last}</span></>;
}

function RightChart() {
  return (
    <div className="flex min-h-0 min-w-0 flex-1 flex-col bg-[#0a0a0a] pl-[2px]">
      <div className="flex h-[21px] shrink-0">
        <div className="flex min-w-0 flex-1 items-center border border-[#666] bg-[#0a0a0a] text-[11px] leading-[19px] text-[#a8a8a8]">
          <b className="w-[142px] shrink-0 whitespace-nowrap border-r border-[#666] pl-[3px] text-white">AUD/USD (MARK) 5 d 5m</b>
          <span className="w-[99px] shrink-0 whitespace-nowrap border-r border-[#666] pl-[3px]">D: 9/5/17 1:00 PM</span>
          <span className="w-[62px] shrink-0 whitespace-nowrap border-r border-[#666] pl-[3px]"><Quote main="O: 0.7980" last="7" /></span>
          <span className="w-[61px] shrink-0 whitespace-nowrap border-r border-[#666] pl-[3px]"><Quote main="H: 0.7981" last="8" /></span>
          <span className="w-[59px] shrink-0 whitespace-nowrap border-r border-[#666] pl-[3px]"><Quote main="L: 0.7978" last="2" /></span>
          <span className="w-[60px] shrink-0 whitespace-nowrap border-r border-[#666] pl-[3px]"><Quote main="C: 0.7978" last="6" /></span>
          <span className="pl-px">...</span>
        </div>
        <button aria-label="Scale" className="flex w-[60px] shrink-0 items-center pl-[5px]">
          <Icon w={17} h={17}>
            <path d="M0 1.500h16M0 15.500h16" stroke="#ddd" strokeWidth="1.500" />
            <path d="M1 11c1 3 5 3 7-2s4-6 8-4" stroke="#ddd" strokeWidth="1.200" />
          </Icon>
        </button>
      </div>
      <div className="flex min-h-0 flex-1">
        <div className="relative min-w-0 flex-1 bg-black">
          <svg viewBox="724 136 557 551" preserveAspectRatio="none" className="absolute inset-0 h-full w-full" fill="none" role="img" aria-label="AUD/USD 5 day 5 minute chart">
            <g stroke="#3c3c3c" shapeRendering="crispEdges">
              {gridX.map((x) => (
                <g key={x}>
                  <path strokeDasharray="1 6" d={`M${x}.500 136V687`} />
                  <path d={`M${x}.500 136v5M${x}.500 682v5`} stroke="#555" />
                </g>
              ))}
              {gridY.map((y) => (
                <g key={y}>
                  <path strokeDasharray="1 6" d={`M731 ${y}.500H1276`} />
                  <path d={`M725 ${y}.500h5M1276 ${y}.500h4`} stroke="#555" />
                </g>
              ))}
              <path d="M724.500 136V687M1280.500 136V687" stroke="#666" />
              <path d="M724 686.500H1281" stroke="#666" />
            </g>
            <Candles data={rightCandles} x0={730.3} step={7.055} body={6} colors={{ g: "#00c22d", r: "#ff5f5f", n: "#b8b8b8" }} />
            <g transform="translate(.5 .5)" strokeWidth="1.200">
              <path stroke="#00f0f5" d="M725 192H730L737 217L744 237L751 280L758 286L765 313L772 326L779 351L787 364L794 361L801 292H935L942 376H957L963 380H984L991 376L998 333L1005 281L1013 255H1147L1154 275L1161 284L1168 297L1175 309H1196L1203 245L1210 213L1217 160H1268" />
              <path stroke="#a9a9a9" d="M725 379H730L744 401L751 423L758 426L765 439L772 446L779 458L787 465L794 463L801 479H935L942 491L949 478L956 470L963 472H984L991 470L998 447L1013 399H1083L1090 391L1097 383L1104 384H1147L1155 395L1175 411H1196L1203 379L1210 362L1217 337H1240L1246 324L1253 317H1268" />
              <path stroke="#ffe9a0" d="M725 565H794L801 666H935L942 607L949 577L956 565H1006L1013 542H1083L1090 526L1097 512L1104 513H1239L1246 485L1253 474H1268" />
            </g>
            <path fill="#fff" d="M989 307h4v11h6l-8 11-8-11h6zM1194 217h4v11h6l-8 11-8-11h6z" />
          </svg>
          <div className="relative flex items-center gap-[3px] pl-[4px] pt-[4px] text-[10px] leading-[14px] text-[#808080]">
            <Icon w={15} h={15}>
              <circle cx="7.500" cy="7.500" r="6.500" stroke="#ddd" strokeWidth="1.200" />
              <path d="M7.500 3v6M7.500 10.500v2" stroke="#ddd" strokeWidth="1.800" />
            </Icon>
            2017 © TD Ameritrade IP Company, Inc.
          </div>
        </div>
        <div className="relative flex w-[60px] shrink-0 flex-col justify-between pb-[3px] pl-[2px] pt-[8px] text-[11px] leading-[12px] text-[#a0a0a0]">
          {rightPrices.map((p) => <span key={p}>{p}</span>)}
          <span className="absolute left-[2px] top-[16px] w-[46px] rounded-[3px] bg-[#00ffff] pl-[3px] leading-[14px] text-black"><Quote main="0.7984" last="2" /></span>
          <span className="absolute left-[2px] top-[95px] w-[46px] rounded-[3px] bg-[#ff5f5f] pl-[3px] leading-[14px] text-black"><Quote main="0.7978" last="6" /></span>
          <span className="absolute left-[2px] top-[173px] w-[46px] rounded-[3px] bg-[#b4b4b4] pl-[3px] leading-[14px] text-black"><Quote main="0.7973" last="1" /></span>
          <span className="absolute left-[2px] top-[330px] w-[46px] rounded-[3px] bg-[#ffe9a0] pl-[3px] leading-[14px] text-black"><Quote main="0.7961" last="9" /></span>
        </div>
      </div>
      <div className="flex h-[20px] shrink-0 items-center pl-[24px] pr-[85px] text-[11px] text-[#a0a0a0]">
        {["7:00", "7:30", "8:00", "8:30", "9:00", "9:30"].map((t) => <span key={t} className="w-0 flex-1">{t}</span>)}
        {["10:00", "11:00", "12:00"].map((t) => <span key={t} className="w-0 flex-[2]">{t}</span>)}
        <span className="w-0 whitespace-nowrap">13:00</span>
      </div>
      <div className="flex h-[16px] shrink-0 items-center">
        <div className="flex h-[13px] min-w-0 flex-1 items-center bg-[#181818] text-[#777]">
          <span className="flex w-[73px] shrink-0 pl-[2px]"><Icon w={4} h={6}><path d="M3 0v6L0 3z" fill="#777" /></Icon></span>
          <button aria-label="Expand" className="flex h-[17px] w-[31px] shrink-0 items-center justify-center border border-[#5a5a5a] bg-[#484848]">
            <Icon w={10} h={10}><path d="M0 1h10" stroke="#ddd" strokeWidth="2" /><path d="M5 3l5 6H0z" fill="#ddd" /></Icon>
          </button>
          <span className="flex-1" />
          <button aria-label="Scroll handle" className="flex h-full w-[15px] items-center justify-center bg-[#3c3c3c]">
            <Icon w={5} h={5}><path d="M.5 0v5M2.500 0v5M4.500 0v5" stroke="#888" /></Icon>
          </button>
          <span className="flex w-[26px] items-center justify-between px-[5px]">
            <Icon w={3} h={5}><path d="M3 0v5L0 2.500z" fill="#666" /></Icon>
            <Icon w={3} h={5}><path d="M0 0v5l3-2.500z" fill="#666" /></Icon>
          </span>
        </div>
        <div className="flex shrink-0 items-center gap-[5px] pl-[3px] pr-[14px]">
          <button aria-label="Pan">
            <Icon w={15} h={10}><path d="M5 0v10L0 5zM10 0v10l5-5z" fill="#ddd" /><path d="M6.500 2v6M8.500 2v6" stroke="#ddd" /></Icon>
          </button>
          <button aria-label="Center">
            <Icon w={14} h={14}><circle cx="7" cy="7" r="5" stroke="#ddd" strokeWidth="1.200" /><path d="M7 0v14M0 7h14" stroke="#ddd" strokeWidth="1.200" /></Icon>
          </button>
          <button aria-label="Zoom in chart">
            <Icon w={16} h={16}><circle cx="7" cy="7" r="6" stroke="#ddd" strokeWidth="1.200" /><path d="M4.500 7h5M7 4.500v5M11.500 11.500L16 16" stroke="#ddd" strokeWidth="1.400" /></Icon>
          </button>
          <button aria-label="Zoom out chart">
            <Icon w={16} h={16}><circle cx="7" cy="7" r="6" stroke="#ddd" strokeWidth="1.200" /><path d="M4.500 7h5M11.500 11.500L16 16" stroke="#ddd" strokeWidth="1.400" /></Icon>
          </button>
          <button aria-label="Select tool"><Pointer /></button>
        </div>
        <button className="relative w-[114px] shrink-0 whitespace-nowrap text-left text-[11px] leading-4 text-[#e6e6e6]">Drawing set: Default<Corner /></button>
      </div>
    </div>
  );
}

function SideTabs() {
  const tabs: [string, string][] = [["Trade", "h-[49px]"], ["Times And Sales", "h-[102px]"], ["Active Trader", "h-[86px]"], ["Big Buttons", "h-[79px]"], ["Chart", "h-[46px] bg-[#6c6c6c]"], ["Dashboard", "h-[76px]"], ["Level II", "h-[55px]"], ["Live News", "h-[71px]"]];
  return (
    <aside className="flex w-[21px] shrink-0 flex-col border-l border-[#5e5e5e] bg-[#464646] text-[11px] text-[#d0d0d0]">
      {tabs.map(([t, c]) => (
        <button key={t} className={`flex w-full shrink-0 items-center justify-center whitespace-nowrap border-b border-[#666] pt-[3px] ${c}`}>
          <span className="rotate-180 leading-5 [writing-mode:vertical-rl]">{t}</span>
        </button>
      ))}
    </aside>
  );
}

function RightWindow() {
  return (
    <section className="flex min-w-0 flex-col bg-[#0a0a0a]">
      <AppHeader />
      <div className="ml-[5px] mr-[3px] flex min-h-0 flex-1 flex-col border-l border-[#00263c]">
        <MainTabs />
        <SubTabs />
        <SymbolBar />
        <div className="flex min-h-0 flex-1">
          <RightChart />
          <SideTabs />
        </div>
      </div>
      <div className="mt-[2px] h-[3px] shrink-0 border-t border-[#555] bg-[#262626]" />
    </section>
  );
}

function Taskbar() {
  return (
    <footer className="relative h-[10px] shrink-0 overflow-hidden border-t border-[#5c6b78] bg-[linear-gradient(90deg,#8fa9c4_0%,#a5c8ea_15%,#a9cdf0_50%,#a0c4e6_51%,#0c141e_52.300%,#070c12_100%)]">
      <svg className="absolute left-0 top-0" width="720" height="10" viewBox="0 729 720 10" aria-hidden="true">
        <g fill="#d4e4f5" stroke="#506880">
          <rect x="122.500" y="728.500" width="57" height="20" rx="2" />
          <rect x="432.500" y="728.500" width="58" height="20" rx="2" fill="#e4eefa" />
          <rect x="494.500" y="728.500" width="58" height="20" rx="2" />
          <rect x="556.500" y="728.500" width="58" height="20" rx="2" />
        </g>
        <circle cx="27" cy="748" r="18" fill="#5d7894" stroke="#c8d8e8" />
        <ellipse cx="25" cy="740" rx="7" ry="4" fill="#b5623c" />
        <path d="M76 735h13l2 2h13v3H76z" fill="#e7cf7c" />
        <path d="M79 735v5M82 735v5" stroke="#2a9a34" strokeWidth="2" />
        <circle cx="151" cy="749" r="15" fill="#dc4b3f" />
        <path d="M205 739c4-5 12-9 20-6" stroke="#f2c41c" strokeWidth="2.500" fill="none" />
        <path d="M211 739c3-4 9-4 12 0" stroke="#2e86cf" strokeWidth="2.500" fill="none" />
        <path d="M262 737h22v3h-22z" fill="#4d92cc" />
        <path d="M326 733l11 1v6h-11z" fill="#1420b4" />
        <path d="M339 733l12 2v5h-10z" fill="#e4ecf4" />
        <circle cx="399" cy="747" r="14" fill="#eef4fa" />
        <path d="M449 737l3-2 3 1 3-3 3 1 3-1 3 3 3-1 3 3" stroke="#e04c2c" strokeWidth="1.500" fill="none" />
        <path d="M453 739l4-2 3 1 4-2 3 2 4 1" stroke="#e89a3c" strokeWidth="1.500" fill="none" />
        <path d="M517 740v-8l11 8" fill="#efe6d0" stroke="#77644a" />
        <path d="M569 732h32v8h-32z" fill="#17512a" />
        <path d="M587 732h5l-3 8h-5z" fill="#8fdc4c" />
      </svg>
      <div className="absolute right-[20px] top-[6px] h-[8px] w-[136px] rounded-[3px] border border-[#8b8660] bg-[#f0eac0]" />
      <div className="absolute right-0 top-px h-[10px] w-[12px] border-l border-t border-[#9aa0a6] bg-[#30363c]" />
    </footer>
  );
}

export default function App() {
  return (
    <main className="flex h-screen flex-col overflow-hidden bg-black font-['Open_Sans','Noto_Sans',sans-serif] leading-4">
      <div className="grid min-h-0 flex-1 grid-cols-[minmax(0,716fr)_minmax(0,649fr)]">
        <LeftWindow />
        <RightWindow />
      </div>
      <Taskbar />
    </main>
  );
}
